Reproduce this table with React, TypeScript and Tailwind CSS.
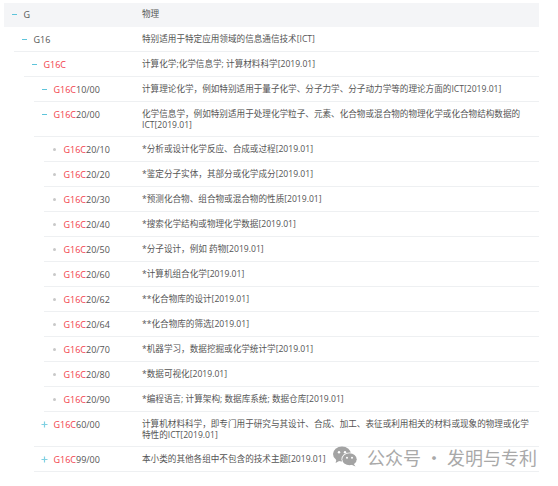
import React from "react";

type Node = {
  code: string;
  desc: string;
  kind: "minus" | "plus" | "dot";
  children?: Node[];
};

const leaf = (n: string, desc: string): Node => ({ code: "G16C" + n, desc, kind: "dot" });

const tree: Node = {
  code: "G",
  desc: "物理",
  kind: "minus",
  children: [
    {
      code: "G16",
      desc: "特别适用于特定应用领域的信息通信技术[ICT]",
      kind: "minus",
      children: [
        {
          code: "G16C",
          desc: "计算化学;化学信息学; 计算材料科学[2019.01]",
          kind: "minus",
          children: [
            {
              code: "G16C10/00",
              desc: "计算理论化学，例如特别适用于量子化学、分子力学、分子动力学等的理论方面的ICT[2019.01]",
              kind: "minus",
            },
            {
              code: "G16C20/00",
              desc: "化学信息学，例如特别适用于处理化学粒子、元素、化合物或混合物的物理化学或化合物结构数据的ICT[2019.01]",
              kind: "minus",
              children: [
                leaf("20/10", "*分析或设计化学反应、合成或过程[2019.01]"),
                leaf("20/20", "*鉴定分子实体，其部分或化学成分[2019.01]"),
                leaf("20/30", "*预测化合物、组合物或混合物的性质[2019.01]"),
                leaf("20/40", "*搜索化学结构或物理化学数据[2019.01]"),
                leaf("20/50", "*分子设计，例如 药物[2019.01]"),
                leaf("20/60", "*计算机组合化学[2019.01]"),
                leaf("20/62", "**化合物库的设计[2019.01]"),
                leaf("20/64", "**化合物库的筛选[2019.01]"),
                leaf("20/70", "*机器学习，数据挖掘或化学统计学[2019.01]"),
                leaf("20/80", "*数据可视化[2019.01]"),
                leaf("20/90", "*编程语言; 计算架构; 数据库系统; 数据仓库[2019.01]"),
              ],
            },
            {
              code: "G16C60/00",
              desc: "计算机材料科学，即专门用于研究与其设计、合成、加工、表征或利用相关的材料或现象的物理或化学特性的ICT[2019.01]",
              kind: "plus",
            },
            {
              code: "G16C99/00",
              desc: "本小类的其他各组中不包含的技术主题[2019.01]",
              kind: "plus",
            },
          ],
        },
      ],
    },
  ],
};

// left column shrinks as the row is indented, so descriptions line up at x=142
const leftWidths = ["w-[138px]", "w-[128px]", "w-[118px]", "w-[108px]", "w-[98px]"];

function Toggle({ kind }: { kind: Node["kind"] }) {
  if (kind === "minus") return <span className="block w-[5px] h-[1.5px] bg-[#5ec4da]" />;
  if (kind === "plus")
    return (
      <svg width="7" height="7" viewBox="0 0 7 7" className="ml-[-1px]">
        <path d="M3.5 0.5v6M0.5 3.5h6" stroke="#7fd0e2" strokeWidth="1.2" />
      </svg>
    );
  return <span className="block w-[3px] h-[3px] rounded-full bg-[#c8c8c8] ml-[0.5px]" />;
}

function Code({ code }: { code: string }) {
  if (code.startsWith("G16C")) {
    return (
      <span>
        <span className="text-[#f2404a]">G16C</span>
        {code.slice(4)}
      </span>
    );
  }
  return <span>{code}</span>;
}

function TreeRow({ node, depth }: { node: Node; depth: number }) {
  const header = depth === 0;
  const pad = header ? "pt-[6px] pb-[6px]" : "pt-[7px] pb-[5px]";
  return (
    <div>
      <div
        className={`flex items-start ${
          header ? "min-h-[24px] bg-[#f4f5f7]" : "min-h-[25px] border-b border-[#eef0f2]"
        }`}
      >
        <div className={`${leftWidths[depth]} ${pad} shrink-0 flex items-start pl-[8px] text-[9px]`}>
          <span className="w-[11.5px] h-[11px] flex items-center shrink-0">
            <Toggle kind={node.kind} />
          </span>
          <Code code={node.code} />
        </div>
        <div className={`flex-1 ${pad} pr-[10px] text-[8.6px]`}>{node.desc}</div>
      </div>
      {node.children && (
        <div className="pl-[10px]">
          {node.children.map((c) => (
            <TreeRow key={c.code} node={c} depth={depth + 1} />
          ))}
        </div>
      )}
    </div>
  );
}

function WeChatIcon() {
  return (
    <svg width="25" height="21" viewBox="0 0 25 21">
      <ellipse cx="9" cy="8" rx="9" ry="7.6" fill="#a3a3a3" />
      <path d="M3.5 13 L2.6 17 L7 14.5 Z" fill="#a3a3a3" />
      <circle cx="6" cy="6.2" r="1.2" fill="#fff" />
      <circle cx="12" cy="6.2" r="1.2" fill="#fff" />
      <ellipse cx="16.5" cy="13.2" rx="8" ry="6.6" fill="#fff" />
      <ellipse cx="16.5" cy="13.2" rx="7.2" ry="6" fill="#a3a3a3" />
      <path d="M20.5 17.5 L22.5 20.6 L18 18.6 Z" fill="#a3a3a3" />
      <circle cx="14" cy="11.8" r="1" fill="#fff" />
      <circle cx="19" cy="11.8" r="1" fill="#fff" />
    </svg>
  );
}

export default function App() {
  return (
    <div
      className="relative w-[558px] h-[486px] bg-white overflow-hidden pt-[3px] pl-[4px] leading-[11px] text-[#555]"
      style={{ fontFamily: '"Open Sans", "Noto Sans CJK SC", sans-serif' }}
    >
      <div className="w-[535px]">
        <TreeRow node={tree} depth={0} />
      </div>
      <div className="absolute left-[333px] top-[446px] flex items-center gap-[9px] text-[18px] leading-[20px] text-[#a9a9a9]">
        <WeChatIcon />
        <span style={{ fontFamily: '"Noto Sans CJK SC", sans-serif' }}>公众号 · 发明与专利</span>
      </div>
    </div>
  );
}
